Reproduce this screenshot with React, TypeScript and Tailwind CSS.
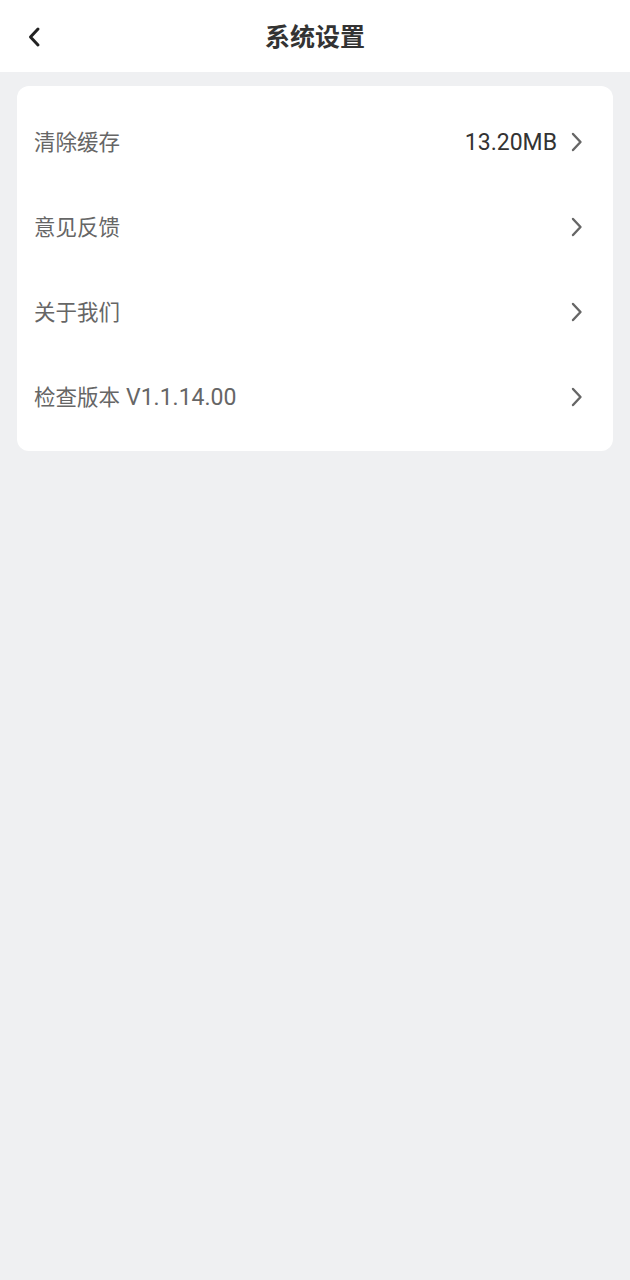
const font = { fontFamily: 'Roboto, "Noto Sans CJK SC", "Noto Sans", sans-serif' }

function Chevron({ dir = 'right', className = '', weight = 2.4 }: { dir?: 'left' | 'right'; className?: string; weight?: number }) {
  return (
    <svg viewBox="0 0 14 22" className={className} fill="none" stroke="currentColor" strokeWidth={weight} strokeLinecap="round" strokeLinejoin="round">
      {dir === 'right' ? <path d="M3.5 3l7.5 8-7.5 8" /> : <path d="M10.5 3l-7.5 8 7.5 8" />}
    </svg>
  )
}

const items = [
  { label: '清除缓存', value: '13.20MB' },
  { label: '意见反馈' },
  { label: '关于我们' },
  { label: '检查版本', extra: 'V1.1.14.00' },
]

export default function App() {
  return (
    <div className="min-h-[1280px] w-full bg-[#eff0f2]" style={font}>
      <header className="relative flex h-[72px] items-center justify-center bg-white">
        <button className="absolute left-[27px] top-[26px] text-[#222]">
          <Chevron dir="left" className="h-[22px] w-[15px]" weight={3} />
        </button>
        <h1 className="mt-[3px] text-[25px] font-bold text-[#333]">系统设置</h1>
      </header>

      <div className="px-[17px] pt-[14px]">
        <div className="rounded-[12px] bg-white pb-[10px] pt-[15px]">
          {items.map((it) => (
            <div key={it.label} className="flex h-[85px] items-center justify-between px-[17px]">
              <span className="text-[21.5px] text-[#666]">
                {it.label}
                {it.extra && <span className="ml-[6px] text-[23px]">{it.extra}</span>}
              </span>
              <div className="flex items-center gap-[12px]">
                {it.value && <span className="text-[23px] text-[#333]">{it.value}</span>}
                <Chevron className="-mt-[3px] mr-[12px] h-[22px] w-[15px] text-[#666]" />
              </div>
            </div>
          ))}
        </div>
      </div>
    </div>
  )
}
